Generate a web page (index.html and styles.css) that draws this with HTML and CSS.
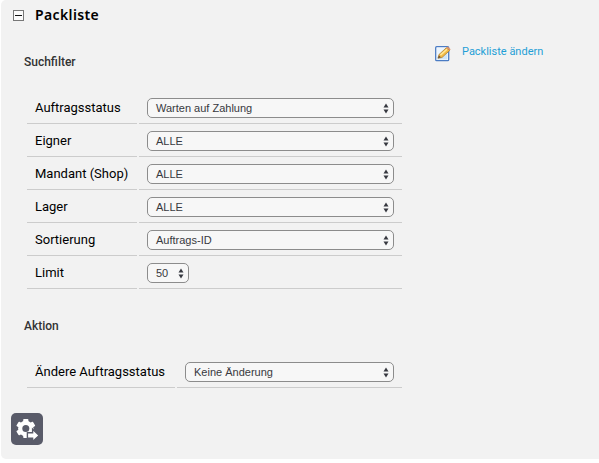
FILE: index.html
```html
<!DOCTYPE html>
<html lang="de">
<head>
<meta charset="utf-8">
<title>Packliste</title>
<link rel="stylesheet" href="styles.css">
</head>
<body>
<main class="panel">
  <header class="head">
    <svg class="toggle" width="11" height="11" viewBox="0 0 11 11"><rect x=".5" y=".5" width="10" height="10" fill="#fafafa" stroke="#777"/><path d="M2 5.5h7" stroke="#111"/></svg>
    <h1>Packliste</h1>
  </header>
  <div class="columns">
    <form class="filters">
      <h2>Suchfilter</h2>
      <div class="rows">
        <div class="row"><label>Auftragsstatus</label><div class="field"><div class="select"><span>Warten auf Zahlung</span><svg width="6" height="11" viewBox="0 0 6 11"><path d="M3 .5 5.5 4.5H.5zM3 10.5 .5 6.5h5z"/></svg></div></div></div>
        <div class="row"><label>Eigner</label><div class="field"><div class="select"><span>ALLE</span><svg width="6" height="11" viewBox="0 0 6 11"><path d="M3 .5 5.5 4.5H.5zM3 10.5 .5 6.5h5z"/></svg></div></div></div>
        <div class="row"><label>Mandant (Shop)</label><div class="field"><div class="select"><span>ALLE</span><svg width="6" height="11" viewBox="0 0 6 11"><path d="M3 .5 5.5 4.5H.5zM3 10.5 .5 6.5h5z"/></svg></div></div></div>
        <div class="row"><label>Lager</label><div class="field"><div class="select"><span>ALLE</span><svg width="6" height="11" viewBox="0 0 6 11"><path d="M3 .5 5.5 4.5H.5zM3 10.5 .5 6.5h5z"/></svg></div></div></div>
        <div class="row"><label>Sortierung</label><div class="field"><div class="select"><span>Auftrags-ID</span><svg width="6" height="11" viewBox="0 0 6 11"><path d="M3 .5 5.5 4.5H.5zM3 10.5 .5 6.5h5z"/></svg></div></div></div>
        <div class="row"><label>Limit</label><div class="field"><div class="select small"><span>50</span><svg width="6" height="11" viewBox="0 0 6 11"><path d="M3 .5 5.5 4.5H.5zM3 10.5 .5 6.5h5z"/></svg></div></div></div>
      </div>
      <h2 class="action-title">Aktion</h2>
      <div class="rows wide">
        <div class="row"><label>Ändere Auftragsstatus</label><div class="field"><div class="select"><span>Keine Änderung</span><svg width="6" height="11" viewBox="0 0 6 11"><path d="M3 .5 5.5 4.5H.5zM3 10.5 .5 6.5h5z"/></svg></div></div></div>
      </div>
    </form>
    <a class="edit">
      <svg width="16" height="17" viewBox="0 0 16 17">
        <rect x=".7" y="1.7" width="13" height="14" rx="1" fill="#fff" stroke="#4b7cc4" stroke-width="1.3"/>
        <path d="M2 3h10.5v11.5H2z" fill="#cfe5f8"/>
        <path d="M2 3h10.5v5L2 12z" fill="#edf6fd"/>
        <path d="M3 13.2 4 9.5 11.3 2.8 14.7 5.5 7 12.5z" fill="#f2bb45" stroke="#a8752b" stroke-width=".7"/>
        <path d="M5.4 10.1 12 4.2" stroke="#ffe79a" stroke-width="1.5"/>
        <path d="m3 13.2.9-2.7 2 1.8z" fill="#6b5034"/>
        <path d="m11.3 2.8 1.3-1.2 3 2.7-.9 1.2z" fill="#df9167"/>
      </svg>
      <span>Packliste ändern</span>
    </a>
  </div>
  <button class="run" type="button" aria-label="Ausführen">
    <svg width="32" height="32" viewBox="0 0 32 32">
      <g fill="#fff"><circle cx="14.8" cy="15.5" r="7.7"/>
      <rect x="12.2" y="5.9" width="5.2" height="19.2" rx=".8"/><rect x="12.2" y="5.9" width="5.2" height="19.2" rx=".8" transform="rotate(60 14.8 15.5)"/><rect x="12.2" y="5.9" width="5.2" height="19.2" rx=".8" transform="rotate(120 14.8 15.5)"/></g>
      <circle cx="14.8" cy="15.5" r="3.5" fill="#595b69"/>
      <path d="M16.4 19.7h5.2v-3.5l6.6 6.2-6.6 6.2v-3.5h-5.2z" fill="#fff" stroke="#595b69" stroke-width="1.4"/>
    </svg>
  </button>
</main>
</body>
</html>
```
FILE: styles.css
```css
* { box-sizing: border-box; }
body { margin: 0; background: #fff; font-family: Roboto, sans-serif; color: #000; }
.panel { height: 459px; margin-left: 1px; padding: 6px 0 0 10px; background: #f2f2f2; border-radius: 5px 0 0 5px; }
.head { display: flex; align-items: center; height: 18px; padding-left: 2px; gap: 11px; }
.toggle { display: block; }
h1 { margin: 0; font: 600 14px/18px "Noto Sans", sans-serif; letter-spacing: .38px; }
.columns { display: flex; height: 389px; }
.filters { width: 391px; padding: 29px 0 0 13px; }
h2 { margin: 0; font-size: 12px; line-height: 18px; font-weight: 500; color: #333; }
.rows { margin: 20px 0 0 3px; width: 375px; }
.row { display: grid; grid-template-columns: 110px 1fr; column-gap: 2px; height: 33px; }
.wide .row { grid-template-columns: 148px 1fr; }
.row label { padding: 8px 0 0 8px; font-size: 13px; line-height: 18px; border-bottom: 1px solid #ccc; white-space: nowrap; }
.field { padding: 7px 8px 0; border-bottom: 1px solid #ccc; }
.select { display: flex; align-items: center; justify-content: space-between; height: 20px; padding: 0 4px 0 8px; border: 1px solid #8c8c8c; border-radius: 5px; background: #f7f7f7; font: 11px/18px "Liberation Sans", sans-serif; color: #373940; }
.select svg { fill: #373940; }
.small { width: 42px; }
.action-title { margin-top: 28px; }
.edit { display: flex; align-items: flex-start; gap: 11px; padding: 21px 0 0 33px; color: #1f9fd6; font-size: 11px; line-height: 13px; }
.run { display: block; width: 32px; height: 32px; padding: 0; border: 0; border-radius: 5px; background: #595b69; }
.run svg { display: block; }
```
